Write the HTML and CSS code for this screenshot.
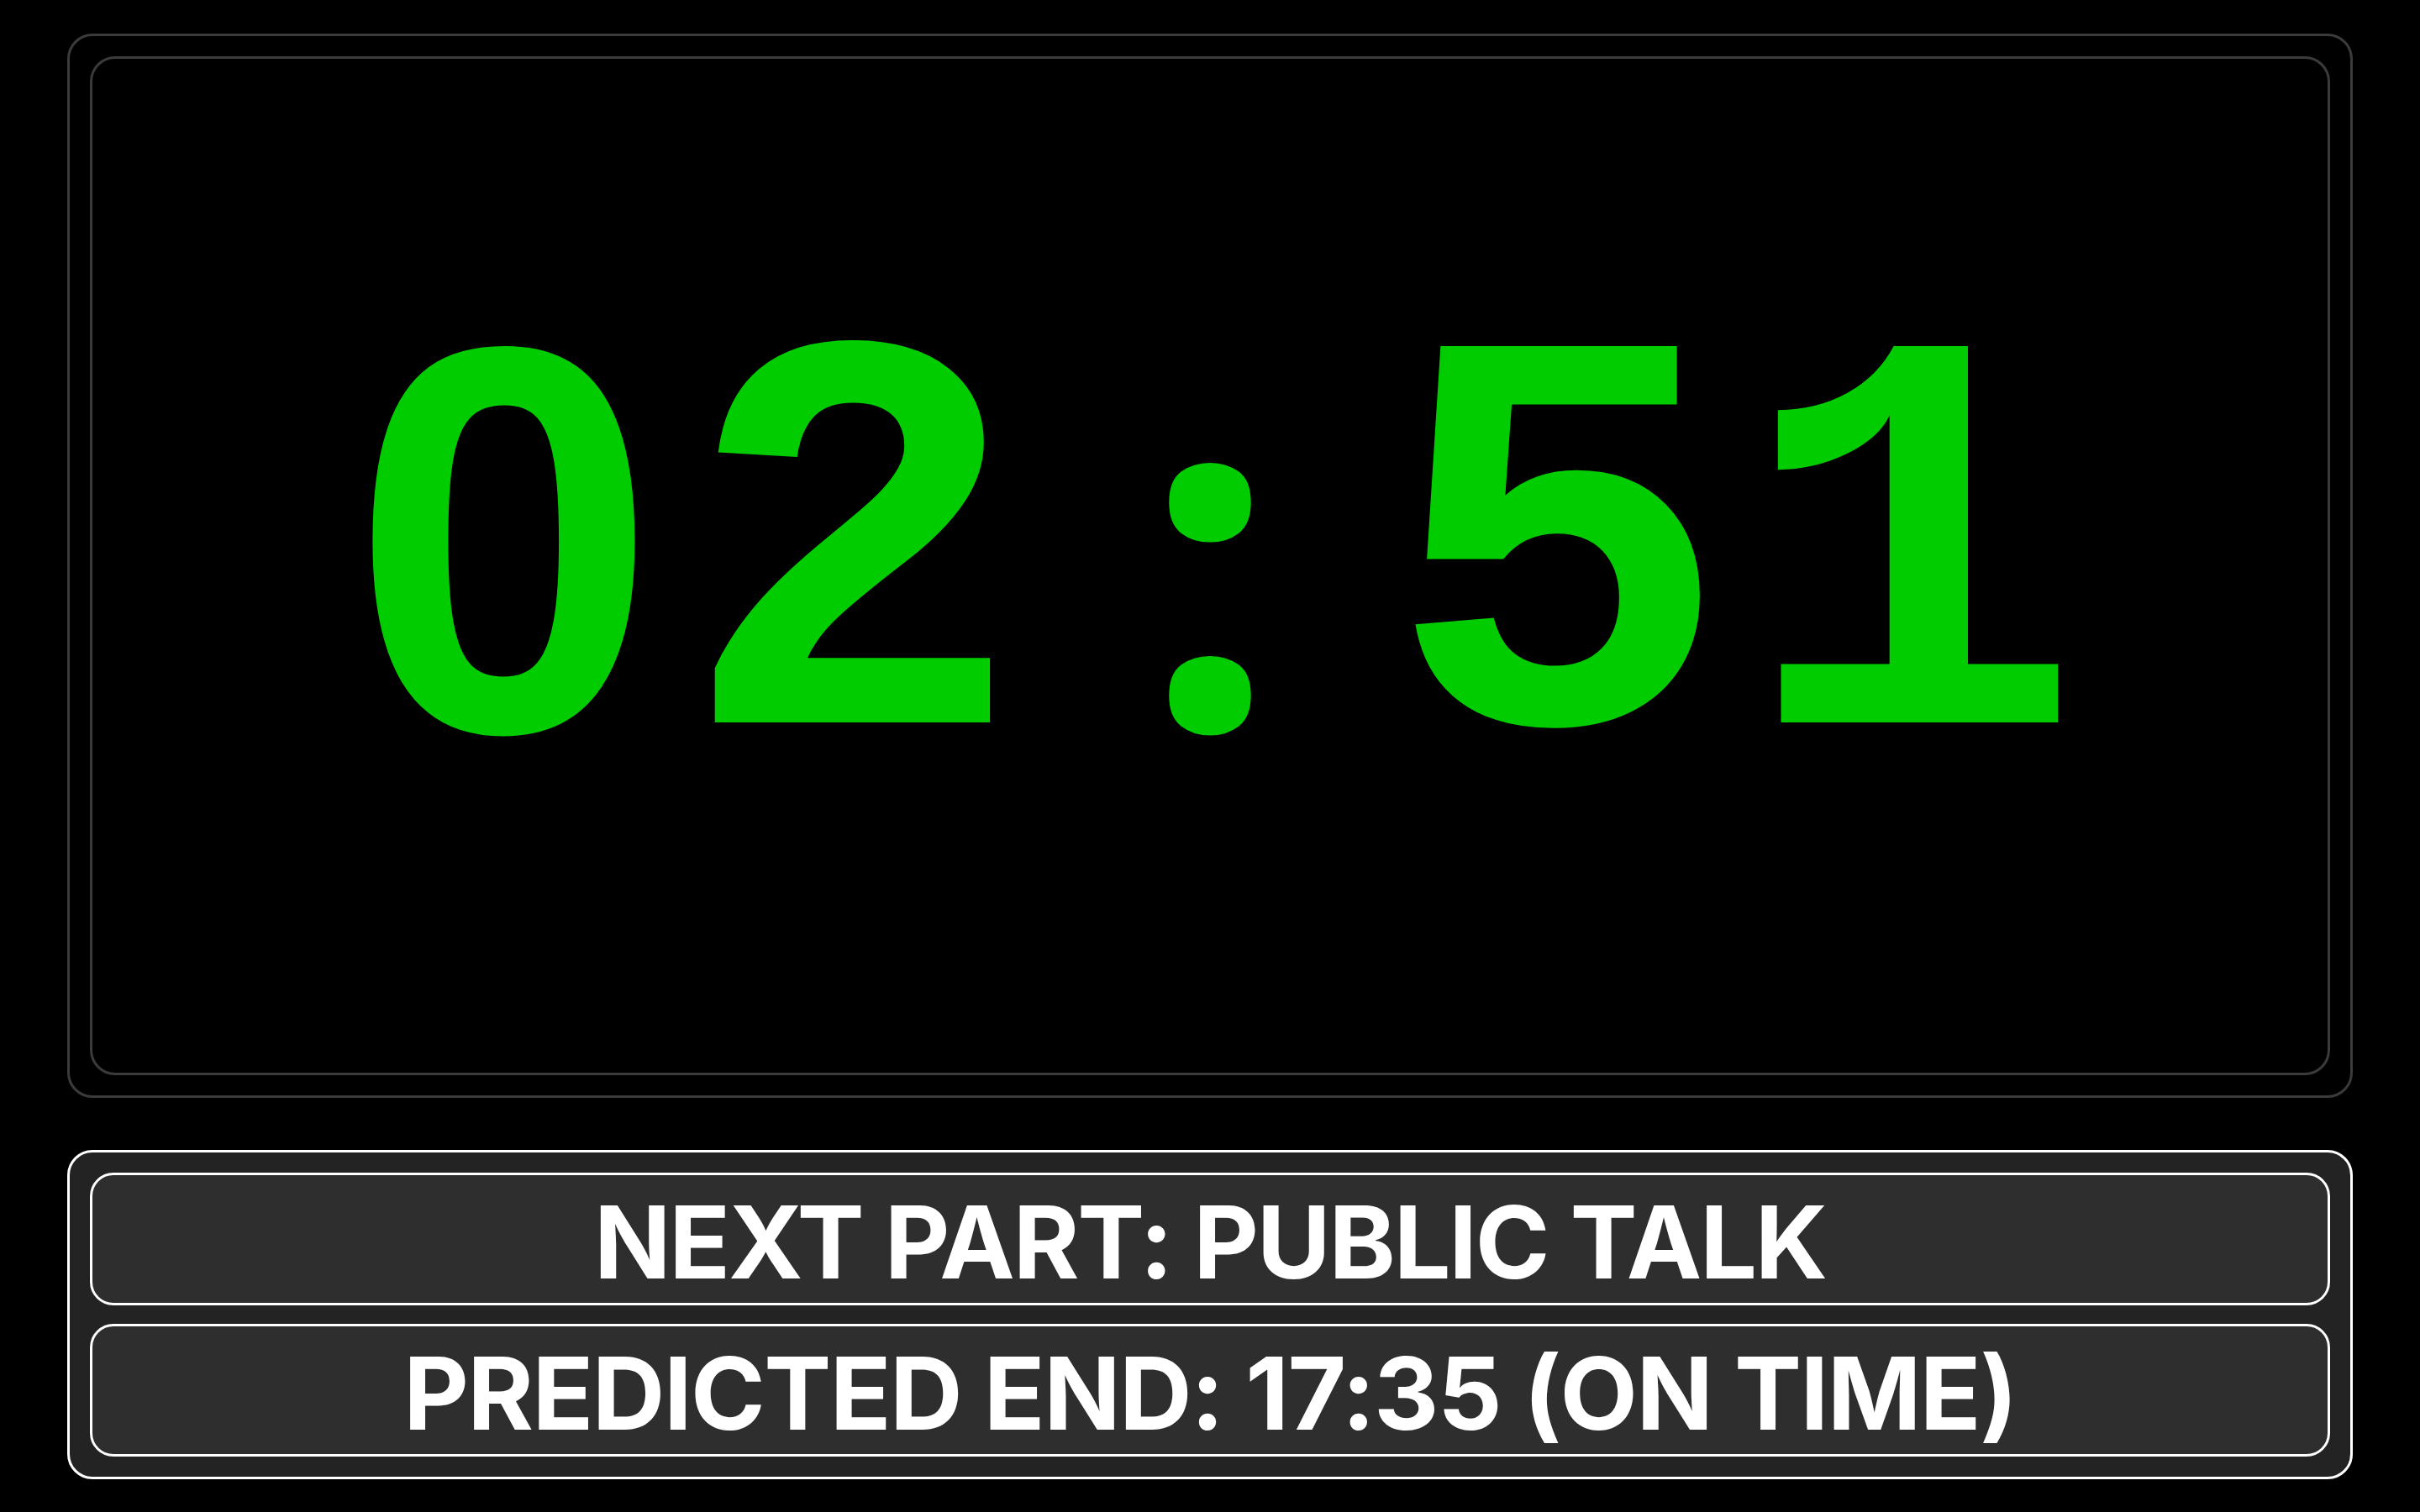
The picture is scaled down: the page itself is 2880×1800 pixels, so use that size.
FILE: index.html
```html
<!DOCTYPE html>
<html lang="en">
<head>
<meta charset="utf-8">
<title>Timer</title>
<link rel="stylesheet" href="styles.css">
</head>
<body>
<main class="screen">
  <section class="clock-panel">
    <div class="clock-frame">
      <div class="clock-time"><span class="glyph-zero">0</span>2<span class="glyph-colon">:</span>51</div>
    </div>
  </section>
  <section class="info-panel">
    <div class="info-row info-next">NEXT PART: PUBLIC TALK</div>
    <div class="info-row info-end">PREDICTED END: 17:35 (ON TIME)</div>
  </section>
</main>
</body>
</html>
```
FILE: styles.css
```css
html, body {
  margin: 0;
  padding: 0;
  background: #000;
}

.screen {
  box-sizing: border-box;
  width: 2880px;
  height: 1800px;
  padding: 40px 80px 39px;
  display: flex;
  flex-direction: column;
  gap: 62px;
}

.clock-panel {
  box-sizing: border-box;
  height: 1271px;
  border: 3px solid #3b3b3b;
  border-radius: 30px;
  padding: 24px;
  display: flex;
}

.clock-frame {
  flex: 1;
  border: 3px solid #3b3b3b;
  border-radius: 30px;
  display: flex;
  align-items: center;
  justify-content: center;
}

.clock-time {
  font-family: "Liberation Mono", "Courier New", monospace;
  font-weight: 700;
  font-size: 680px;
  letter-spacing: 12px;
  line-height: 1;
  color: #00cc00;
  margin-top: 10px;
  white-space: nowrap;
}

.glyph-zero {
  display: inline-block;
  width: 420px;
  text-align: center;
  letter-spacing: 0;
  line-height: 0.8;
  vertical-align: -10px;
  font-family: "Liberation Sans", Arial, sans-serif;
  font-size: 656px;
}

.glyph-colon {
  display: inline-block;
  width: 420px;
  text-align: center;
  letter-spacing: 0;
  line-height: 0.8;
  vertical-align: -8px;
  font-family: "Open Sans", sans-serif;
  font-size: 570px;
}

.info-panel {
  box-sizing: border-box;
  flex: 1;
  background: #232323;
  border: 3px solid #fff;
  border-radius: 30px;
  padding: 24px;
  display: flex;
  flex-direction: column;
  gap: 22px;
}

.info-row {
  flex: 1;
  background: #2e2e2e;
  border: 3px solid #fff;
  border-radius: 28px;
  display: flex;
  align-items: center;
  justify-content: center;
  font-family: Inter, "Noto Sans", sans-serif;
  font-weight: 700;
  font-size: 120px;
  color: #fff;
  padding-top: 7px;
}

.info-next {
  letter-spacing: -2.2px;
}

.info-end {
  letter-spacing: -1.6px;
}
```
